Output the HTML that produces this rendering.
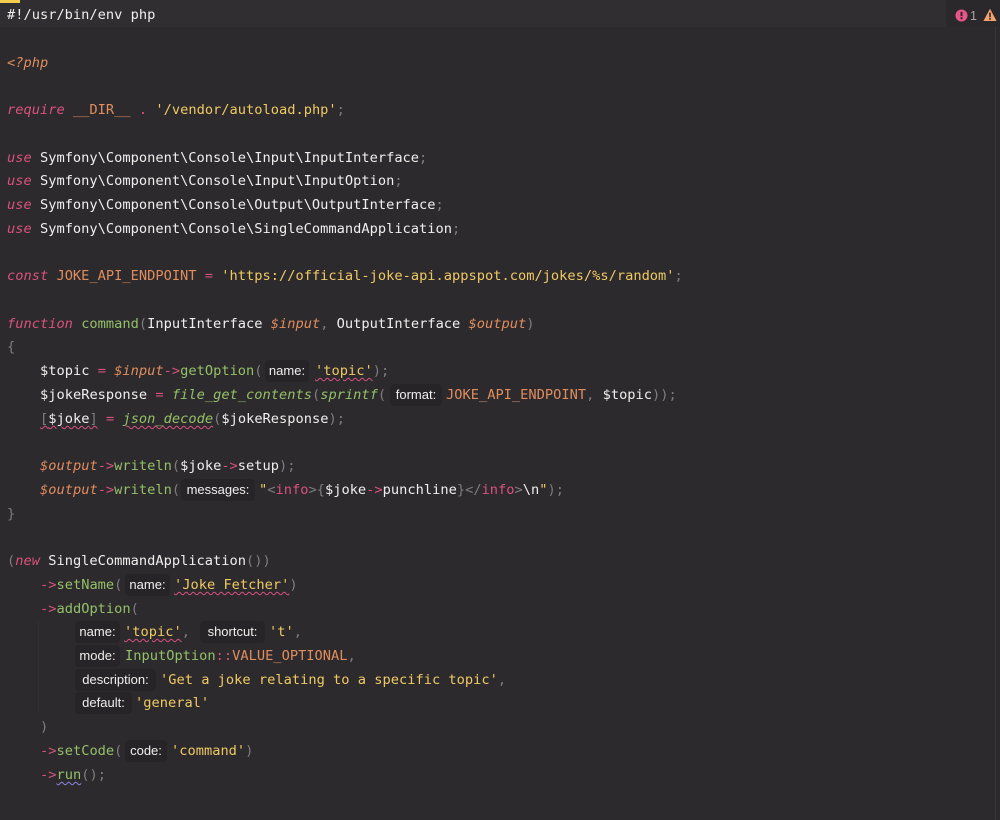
<!DOCTYPE html>
<html><head><meta charset="utf-8"><style>
html,body{margin:0;padding:0;background:#2c2a2d;width:1000px;height:820px;overflow:hidden}
#e{position:relative;width:1000px;height:820px;overflow:hidden;background:#2c2a2d;font-family:"DejaVu Sans Mono","Liberation Mono",monospace;font-size:13.69px;color:#efefed}
.l{position:absolute;white-space:pre;line-height:20px;height:20px;margin-top:1px}
.w{color:#efefed}.p{color:#d9527b}.o{color:#e08d5e}.y{color:#efc964}.g{color:#93c068}.m{color:#7f7d7f}
i{font-style:italic}
.h{position:absolute;font-family:"Liberation Sans",sans-serif;font-size:13px;line-height:21px;height:22px;background:#262427;border-radius:4px;color:#efefed;text-align:center;white-space:pre}
.sq{text-decoration:underline wavy #d8527f 1px;text-underline-offset:2px}
.sb{text-decoration:underline wavy #8a86e0 1px;text-underline-offset:2px}
.a{position:absolute}
</style></head><body><div id="e">
<div class="a" style="left:0;top:0;width:946px;height:27px;background:#302e31"></div>
<div class="a" style="left:946px;top:0;width:54px;height:27px;background:#2a282b"></div>
<div class="a" style="left:0;top:0;width:20px;height:3px;background:#f3cd4e"></div>
<div class="a" style="left:995px;top:27px;width:1px;height:793px;background:#383639"></div>
<div class="a" style="left:38px;top:620px;width:1px;height:92px;background:#322f33"></div>

<div class="l" style="left:7px;top:4px">#!/usr/bin/env php</div>
<svg class="a" style="left:955px;top:9px" width="13" height="13" viewBox="0 0 13 13"><circle cx="6.5" cy="6.5" r="6" fill="#e9558a"/><rect x="5.5" y="2.8" width="2" height="4.4" fill="#2a282b"/><rect x="5.5" y="8.2" width="2" height="2" fill="#2a282b"/></svg>
<div class="a" style="left:970px;top:6px;font:12.5px/20px 'Liberation Sans',sans-serif;color:#a8a6a8">1</div>
<svg class="a" style="left:983px;top:8px" width="14" height="14" viewBox="0 0 14 14"><path d="M7 .8L13.6 13H.4Z" fill="#f4a06f"/><rect x="6.2" y="4.6" width="1.6" height="4.6" fill="#2a282b"/><rect x="6.2" y="10" width="1.6" height="1.7" fill="#2a282b"/></svg>

<div class="l" style="left:7px;top:52px"><i class="o">&lt;?php</i></div>
<div class="l" style="left:7px;top:99px"><i class="p">require</i> <span class="o">__DIR__</span> <span class="p">.</span> <span class="y">'/vendor/autoload.php'</span><span class="m">;</span></div>
<div class="l" style="left:7px;top:147px"><i class="p">use</i> Symfony\Component\Console\Input\InputInterface<span class="m">;</span></div>
<div class="l" style="left:7px;top:170px"><i class="p">use</i> Symfony\Component\Console\Input\InputOption<span class="m">;</span></div>
<div class="l" style="left:7px;top:194px"><i class="p">use</i> Symfony\Component\Console\Output\OutputInterface<span class="m">;</span></div>
<div class="l" style="left:7px;top:218px"><i class="p">use</i> Symfony\Component\Console\SingleCommandApplication<span class="m">;</span></div>
<div class="l" style="left:7px;top:265px"><i class="p">const</i> <span class="o">JOKE_API_ENDPOINT</span> <span class="p">=</span> <span class="y">'https://official-joke-api.appspot.com/jokes/%s/random'</span><span class="m">;</span></div>
<div class="l" style="left:7px;top:313px"><i class="p">function</i> <span class="g">command</span><span class="m">(</span>InputInterface <i class="o">$input</i><span class="m">,</span> OutputInterface <i class="o">$output</i><span class="m">)</span></div>
<div class="l m" style="left:7px;top:336px">{</div>

<div class="l" style="left:40px;top:360px">$topic <span class="p">=</span> <i class="o">$input</i><span class="p">-&gt;</span><span class="g">getOption</span><span class="m">(</span></div>
<div class="h" style="left:265px;top:360px;width:44px">name:</div>
<div class="l" style="left:315px;top:360px"><span class="y sq">'topic'</span><span class="m">)</span><span class="m">;</span></div>

<div class="l" style="left:40px;top:384px">$jokeResponse <span class="p">=</span> <i class="g">file_get_contents</i><span class="m">(</span><i class="g">sprintf</i><span class="m">(</span></div>
<div class="h" style="left:390px;top:384px;width:52px">format:</div>
<div class="l" style="left:446px;top:384px"><span class="o">JOKE_API_ENDPOINT</span><span class="m">,</span> $topic<span class="m">));</span></div>

<div class="l" style="left:40px;top:408px"><span class="sq"><span class="m">[</span>$joke<span class="m">]</span></span> <span class="p">=</span> <i class="g sq">json_decode</i><span class="m">(</span>$jokeResponse<span class="m">);</span></div>

<div class="l" style="left:40px;top:455px"><i class="o">$output</i><span class="p">-&gt;</span><span class="g">writeln</span><span class="m">(</span>$joke<span class="p">-&gt;</span>setup<span class="m">);</span></div>
<div class="l" style="left:40px;top:479px"><i class="o">$output</i><span class="p">-&gt;</span><span class="g">writeln</span><span class="m">(</span></div>
<div class="h" style="left:181px;top:479px;width:74px">messages:</div>
<div class="l" style="left:259px;top:479px"><span class="y">"</span><span class="m">&lt;</span><span class="p">info</span><span class="m">&gt;</span><span class="m">{</span>$joke<span class="p">-&gt;</span>punchline<span class="m">}</span><span class="m">&lt;/</span><span class="p">info</span><span class="m">&gt;</span>\n<span class="y">"</span><span class="m">);</span></div>
<div class="l m" style="left:7px;top:503px">}</div>

<div class="l" style="left:7px;top:550px"><span class="m">(</span><i class="p">new</i> SingleCommandApplication<span class="m">())</span></div>
<div class="l" style="left:40px;top:574px"><span class="p">-&gt;</span><span class="g">setName</span><span class="m">(</span></div>
<div class="h" style="left:125px;top:574px;width:45px">name:</div>
<div class="l" style="left:174px;top:574px"><span class="y sq">'Joke Fetcher'</span><span class="m">)</span></div>
<div class="l" style="left:40px;top:598px"><span class="p">-&gt;</span><span class="g">addOption</span><span class="m">(</span></div>

<div class="h" style="left:75px;top:621px;width:45px">name:</div>
<div class="l" style="left:124px;top:621px"><span class="y sq">'topic'</span><span class="m">,</span></div>
<div class="h" style="left:200px;top:621px;width:65px">shortcut:</div>
<div class="l" style="left:269px;top:621px"><span class="y">'t'</span><span class="m">,</span></div>

<div class="h" style="left:75px;top:645px;width:45px">mode:</div>
<div class="l" style="left:125px;top:645px"><span class="g">InputOption</span><span class="p">::</span><span class="o">VALUE_OPTIONAL</span><span class="m">,</span></div>

<div class="h" style="left:75px;top:669px;width:81px">description:</div>
<div class="l" style="left:160px;top:669px"><span class="y">'Get a joke relating to a specific topic'</span><span class="m">,</span></div>

<div class="h" style="left:75px;top:692px;width:57px">default:</div>
<div class="l" style="left:135px;top:692px"><span class="y">'general'</span></div>

<div class="l m" style="left:40px;top:716px">)</div>
<div class="l" style="left:40px;top:740px"><span class="p">-&gt;</span><span class="g">setCode</span><span class="m">(</span></div>
<div class="h" style="left:125px;top:740px;width:42px">code:</div>
<div class="l" style="left:171px;top:740px"><span class="y">'command'</span><span class="m">)</span></div>
<div class="l" style="left:40px;top:764px"><span class="p">-&gt;</span><span class="g sb">run</span><span class="m">();</span></div>
</div></body></html>
